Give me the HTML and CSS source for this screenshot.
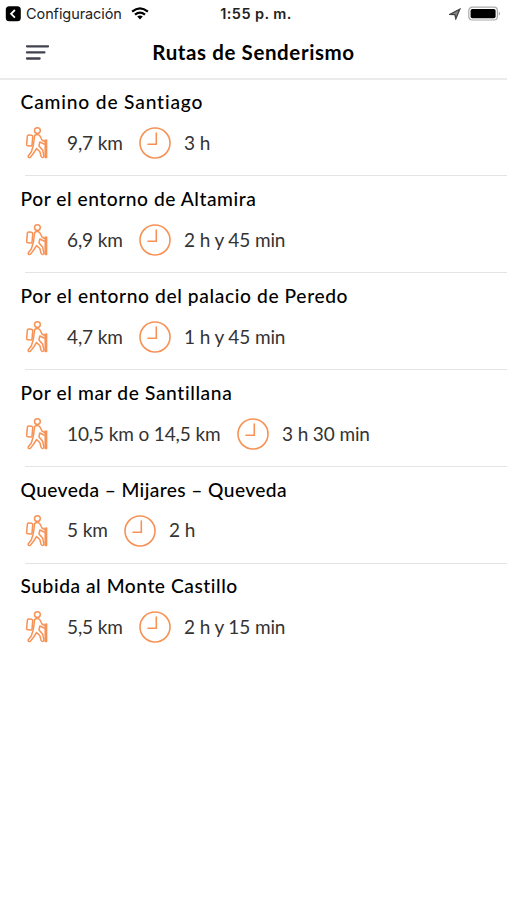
FILE: index.html
```html
<!DOCTYPE html>
<html lang="es">
<head>
<meta charset="utf-8">
<title>Rutas de Senderismo</title>
<link rel="stylesheet" href="styles.css">
</head>
<body>
<svg class="defs" width="0" height="0">
  <symbol id="hiker" viewBox="0 0 24 34">
    <g fill="none" stroke="currentColor" stroke-width="1.5" stroke-linejoin="round" stroke-linecap="round">
      <circle cx="12.4" cy="4.6" r="2.9"/>
      <rect x="2" y="9" width="5.4" height="11" rx="1.4" transform="rotate(5 4.7 14.5)"/>
      <path d="M9.7 9.4Q12.8 7.3 15 10L17 14L20.6 16.2Q20.6 18.4 19 18L14.8 16L14 20L17.7 24.3L19 30.4Q17.6 32.4 16.2 30.6L14.8 25.5L11.5 22.6L8.7 27L5.3 31.4Q2.9 32.2 3.2 30L6.4 25.7L8.4 19Z"/>
      <path d="M20.1 14V16M21.6 14V31.6H20.2V18.5"/>
    </g>
  </symbol>
  <symbol id="clock" viewBox="0 0 32 32">
    <g fill="none" stroke="currentColor" stroke-width="1.6" stroke-linecap="round">
      <circle cx="16" cy="16" r="15"/>
      <path d="M17.3 6V17.2H9"/>
    </g>
  </symbol>
</svg>
<div class="status">
  <div class="back">
    <svg width="16" height="16" viewBox="0 0 16 16"><rect x=".8" y=".3" width="15" height="15" rx="3.5"/><path d="M9.9 4L6.1 7.8L9.9 11.6" fill="none" stroke="#fff" stroke-width="1.8"/></svg>
    <span>Configuración</span>
    <svg class="wifi" width="18" height="13" viewBox="0 0 18 13"><g fill="none" stroke="#000" stroke-width="2.2"><path d="M1.1 4.6Q9 -2 16.9 4.6"/><path d="M4 7.7Q9 3.4 14 7.7"/></g><path d="M6.2 9.5Q9 7.4 11.8 9.5L9 12.4Z"/></svg>
  </div>
  <div class="time">1:55 p. m.</div>
  <div class="power">
    <svg width="12" height="12" viewBox="0 0 12 12"><path d="M1 6.3L10.8 1.2L6.8 10.8L5.9 6.6Z" fill="#888" stroke="#444" stroke-width="1.3"/></svg>
    <svg width="33" height="16" viewBox="0 0 33 16"><rect x=".8" y="1.2" width="28.6" height="12.8" rx="3.5" fill="#fff" stroke="#aaa" stroke-width="1.2"/><rect x="2.6" y="3" width="25" height="9.2" rx="1.8"/><path d="M30.8 5.5Q33 7.6 30.8 9.7Z" fill="#999"/></svg>
  </div>
</div>
<header class="bar">
  <svg class="menu" width="24" height="17" viewBox="0 0 24 17"><path d="M2 2.3H23M2 8.4H19.4M2 14.5H14.6" stroke="#41414f" stroke-width="2.3" stroke-linecap="round"/></svg>
  <h1>Rutas de Senderismo</h1>
</header>
<main>
  <section class="route"><h2 class="wide">Camino de Santiago</h2><div class="info"><svg class="hiker"><use href="#hiker"/></svg><span class="distance">9,7 km</span><svg class="clock"><use href="#clock"/></svg><span>3 h</span></div></section>
  <section class="route"><h2>Por el entorno de Altamira</h2><div class="info"><svg class="hiker"><use href="#hiker"/></svg><span class="distance">6,9 km</span><svg class="clock"><use href="#clock"/></svg><span>2 h y 45 min</span></div></section>
  <section class="route"><h2 class="roomy">Por el entorno del palacio de Peredo</h2><div class="info"><svg class="hiker"><use href="#hiker"/></svg><span class="distance">4,7 km</span><svg class="clock"><use href="#clock"/></svg><span>1 h y 45 min</span></div></section>
  <section class="route"><h2 class="roomy">Por el mar de Santillana</h2><div class="info"><svg class="hiker"><use href="#hiker"/></svg><span class="distance long">10,5 km o 14,5 km</span><svg class="clock"><use href="#clock"/></svg><span>3 h 30 min</span></div></section>
  <section class="route"><h2 class="tight">Queveda – Mijares – Queveda</h2><div class="info"><svg class="hiker"><use href="#hiker"/></svg><span class="distance short">5 km</span><svg class="clock"><use href="#clock"/></svg><span>2 h</span></div></section>
  <section class="route"><h2>Subida al Monte Castillo</h2><div class="info"><svg class="hiker"><use href="#hiker"/></svg><span class="distance">5,5 km</span><svg class="clock"><use href="#clock"/></svg><span>2 h y 15 min</span></div></section>
</main>
</body>
</html>
```
FILE: styles.css
```css
* { box-sizing: border-box; }
body { margin: 0; background: #fff; color: #000; font-family: Lato, "Open Sans", sans-serif; height: 900px; overflow: hidden; }
svg { display: block; flex: none; }
.defs { position: absolute; }
.status { height: 27px; display: grid; grid-template-columns: 1fr auto 1fr; padding: 0 6px 0 5px; align-items: center; font-family: Inter, sans-serif; font-size: 14.5px; }
.back { display: flex; align-items: center; gap: 5px; color: #222; white-space: nowrap; }
.back span { width: 95px; letter-spacing: -.08px; }
.back .wifi { margin-left: 5px; }
.time { font-weight: 600; font-size: 14.5px; letter-spacing: .4px; color: #222; white-space: nowrap; padding-left: 6px; }
.power { display: flex; justify-content: flex-end; align-items: center; gap: 7px; }
.bar { height: 53px; padding-bottom: 1px; border-bottom: 2px solid #ebebeb; display: grid; grid-template-columns: 100px 1fr 100px; align-items: center; }
.menu { margin: 0 0 0 24.5px; }
.bar h1 { margin: 0; text-align: center; font-size: 20.5px; line-height: 28px; font-weight: 700; letter-spacing: .6px; white-space: nowrap; }
.route { height: 96.9px; padding: 8px 0 0 20.5px; background: linear-gradient(#e4e4e4, #e4e4e4) 25px calc(100% - .5px) / 100% 1px no-repeat; }
.route:last-child { background: none; }
.route h2 { margin: 0; height: 28px; line-height: 27px; font-size: 19.2px; font-weight: 500; letter-spacing: .55px; white-space: nowrap; }
.route h2.wide { letter-spacing: .84px; }
.route h2.roomy { letter-spacing: .62px; }
.route h2.tight { letter-spacing: .4px; }
.info { display: flex; align-items: center; height: 32px; margin-top: 11px; font-size: 19px; line-height: 24px; letter-spacing: -.12px; color: #333; white-space: nowrap; }
.info span { padding-bottom: .3px; }
.hiker { width: 24px; height: 34px; margin: 0 18px 0 4.5px; color: #f79256; }
.distance { width: 56px; margin-right: 16px; }
.distance.long { width: 154px; }
.distance.short { width: 41px; }
.clock { width: 32px; height: 32px; margin-right: 13px; color: #f79256; }
```
